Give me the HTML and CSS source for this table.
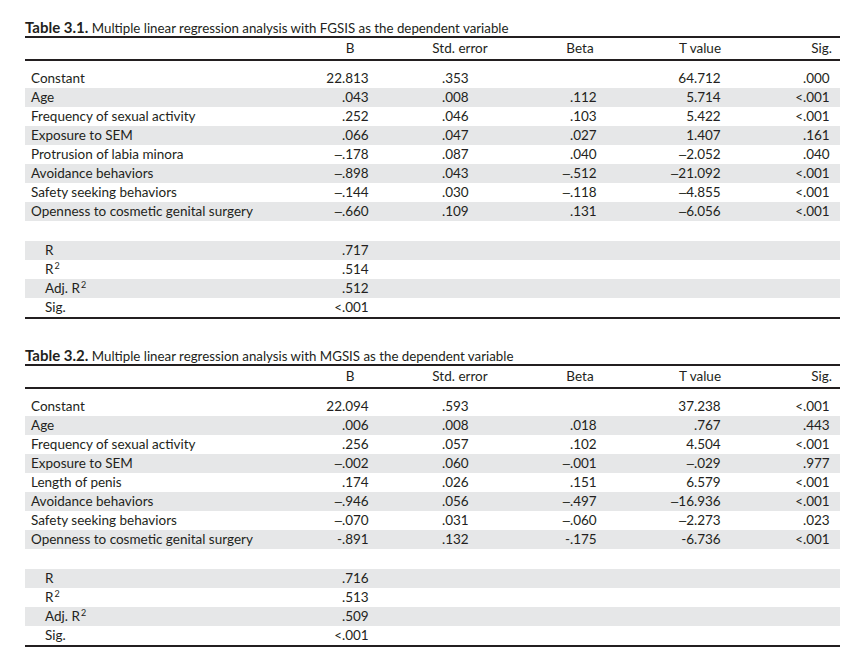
FILE: index.html
```html
<!DOCTYPE html>
<html lang="en">
<head>
<meta charset="utf-8">
<title>Regression tables</title>
<link rel="stylesheet" href="styles.css">
</head>
<body>
<div class="page">

  <section class="tbl">
    <div class="caption"><b>Table 3.1.</b> Multiple linear regression analysis with FGSIS as the dependent variable</div>
    <div class="row head">
      <div class="lab"></div><div class="h">B</div><div class="h">Std. error</div><div class="h">Beta</div><div class="h">T value</div><div class="h hr">Sig.</div>
    </div>
    <div class="body">
      <div class="row"><div class="lab">Constant</div><div class="cb"><span class="i">22</span>.813</div><div class="cs"><span class="i"></span>.353</div><div class="cbe"></div><div class="ct"><span class="i">64</span>.712</div><div class="cg"><span class="i"></span>.000</div></div>
      <div class="row alt"><div class="lab">Age</div><div class="cb"><span class="i"></span>.043</div><div class="cs"><span class="i"></span>.008</div><div class="cbe"><span class="i"></span>.112</div><div class="ct"><span class="i">5</span>.714</div><div class="cg"><span class="i">&lt;</span>.001</div></div>
      <div class="row"><div class="lab">Frequency of sexual activity</div><div class="cb"><span class="i"></span>.252</div><div class="cs"><span class="i"></span>.046</div><div class="cbe"><span class="i"></span>.103</div><div class="ct"><span class="i">5</span>.422</div><div class="cg"><span class="i">&lt;</span>.001</div></div>
      <div class="row alt"><div class="lab">Exposure to SEM</div><div class="cb"><span class="i"></span>.066</div><div class="cs"><span class="i"></span>.047</div><div class="cbe"><span class="i"></span>.027</div><div class="ct"><span class="i">1</span>.407</div><div class="cg"><span class="i"></span>.161</div></div>
      <div class="row"><div class="lab">Protrusion of labia minora</div><div class="cb"><span class="i"><span class="m">–</span></span>.178</div><div class="cs"><span class="i"></span>.087</div><div class="cbe"><span class="i"></span>.040</div><div class="ct"><span class="i"><span class="m">–</span>2</span>.052</div><div class="cg"><span class="i"></span>.040</div></div>
      <div class="row alt"><div class="lab">Avoidance behaviors</div><div class="cb"><span class="i"><span class="m">–</span></span>.898</div><div class="cs"><span class="i"></span>.043</div><div class="cbe"><span class="i"><span class="m">–</span></span>.512</div><div class="ct"><span class="i"><span class="m">–</span>21</span>.092</div><div class="cg"><span class="i">&lt;</span>.001</div></div>
      <div class="row"><div class="lab">Safety seeking behaviors</div><div class="cb"><span class="i"><span class="m">–</span></span>.144</div><div class="cs"><span class="i"></span>.030</div><div class="cbe"><span class="i"><span class="m">–</span></span>.118</div><div class="ct"><span class="i"><span class="m">–</span>4</span>.855</div><div class="cg"><span class="i">&lt;</span>.001</div></div>
      <div class="row alt"><div class="lab">Openness to cosmetic genital surgery</div><div class="cb"><span class="i"><span class="m">–</span></span>.660</div><div class="cs"><span class="i"></span>.109</div><div class="cbe"><span class="i"></span>.131</div><div class="ct"><span class="i"><span class="m">–</span>6</span>.056</div><div class="cg"><span class="i">&lt;</span>.001</div></div>
      <div class="row blank"></div>
      <div class="row alt"><div class="lab st">R</div><div class="cb"><span class="i"></span>.717</div></div>
      <div class="row"><div class="lab st">R<span class="sup">2</span></div><div class="cb"><span class="i"></span>.514</div></div>
      <div class="row alt"><div class="lab st">Adj. R<span class="sup">2</span></div><div class="cb"><span class="i"></span>.512</div></div>
      <div class="row"><div class="lab st">Sig.</div><div class="cb"><span class="i">&lt;</span>.001</div></div>
    </div>
  </section>

  <section class="tbl second">
    <div class="caption"><b>Table 3.2.</b> Multiple linear regression analysis with MGSIS as the dependent variable</div>
    <div class="row head">
      <div class="lab"></div><div class="h">B</div><div class="h">Std. error</div><div class="h">Beta</div><div class="h">T value</div><div class="h hr">Sig.</div>
    </div>
    <div class="body">
      <div class="row"><div class="lab">Constant</div><div class="cb"><span class="i">22</span>.094</div><div class="cs"><span class="i"></span>.593</div><div class="cbe"></div><div class="ct"><span class="i">37</span>.238</div><div class="cg"><span class="i">&lt;</span>.001</div></div>
      <div class="row alt"><div class="lab">Age</div><div class="cb"><span class="i"></span>.006</div><div class="cs"><span class="i"></span>.008</div><div class="cbe"><span class="i"></span>.018</div><div class="ct"><span class="i"></span>.767</div><div class="cg"><span class="i"></span>.443</div></div>
      <div class="row"><div class="lab">Frequency of sexual activity</div><div class="cb"><span class="i"></span>.256</div><div class="cs"><span class="i"></span>.057</div><div class="cbe"><span class="i"></span>.102</div><div class="ct"><span class="i">4</span>.504</div><div class="cg"><span class="i">&lt;</span>.001</div></div>
      <div class="row alt"><div class="lab">Exposure to SEM</div><div class="cb"><span class="i"><span class="m">–</span></span>.002</div><div class="cs"><span class="i"></span>.060</div><div class="cbe"><span class="i"><span class="m">–</span></span>.001</div><div class="ct"><span class="i"><span class="m">–</span></span>.029</div><div class="cg"><span class="i"></span>.977</div></div>
      <div class="row"><div class="lab">Length of penis</div><div class="cb"><span class="i"></span>.174</div><div class="cs"><span class="i"></span>.026</div><div class="cbe"><span class="i"></span>.151</div><div class="ct"><span class="i">6</span>.579</div><div class="cg"><span class="i">&lt;</span>.001</div></div>
      <div class="row alt"><div class="lab">Avoidance behaviors</div><div class="cb"><span class="i"><span class="m">–</span></span>.946</div><div class="cs"><span class="i"></span>.056</div><div class="cbe"><span class="i"><span class="m">–</span></span>.497</div><div class="ct"><span class="i"><span class="m">–</span>16</span>.936</div><div class="cg"><span class="i">&lt;</span>.001</div></div>
      <div class="row"><div class="lab">Safety seeking behaviors</div><div class="cb"><span class="i"><span class="m">–</span></span>.070</div><div class="cs"><span class="i"></span>.031</div><div class="cbe"><span class="i"><span class="m">–</span></span>.060</div><div class="ct"><span class="i"><span class="m">–</span>2</span>.273</div><div class="cg"><span class="i"></span>.023</div></div>
      <div class="row alt"><div class="lab">Openness to cosmetic genital surgery</div><div class="cb"><span class="i">-</span>.891</div><div class="cs"><span class="i"></span>.132</div><div class="cbe"><span class="i">-</span>.175</div><div class="ct"><span class="i">-6</span>.736</div><div class="cg"><span class="i">&lt;</span>.001</div></div>
      <div class="row blank"></div>
      <div class="row alt"><div class="lab st">R</div><div class="cb"><span class="i"></span>.716</div></div>
      <div class="row"><div class="lab st">R<span class="sup">2</span></div><div class="cb"><span class="i"></span>.513</div></div>
      <div class="row alt"><div class="lab st">Adj. R<span class="sup">2</span></div><div class="cb"><span class="i"></span>.509</div></div>
      <div class="row"><div class="lab st">Sig.</div><div class="cb"><span class="i">&lt;</span>.001</div></div>
    </div>
  </section>

</div>
</body>
</html>
```

FILE: styles.css
```css
html, body {
  margin: 0;
  padding: 0;
  background: #ffffff;
}

body {
  font-family: "Lato", "Liberation Sans", sans-serif;
  font-size: 13.5px;
  color: #231f20;
}

.page {
  width: 815px;
  margin-left: 25px;
  display: flex;
  flex-direction: column;
}

.tbl {
  margin-top: 18px;
}

.tbl.second {
  margin-top: 27px;
}

.caption {
  height: 18px;
  line-height: 18px;
  border-bottom: 2px solid #231f20;
  white-space: nowrap;
  font-size: 13.3px;
}

.caption b {
  font-size: 15px;
  font-weight: 700;
}

.row {
  display: grid;
  grid-template-columns: 275px 100px 120px 120px 120px 80px;
  height: 19px;
  line-height: 19px;
  white-space: nowrap;
}

.row.head {
  height: 21px;
  line-height: 21px;
  border-bottom: 2px solid #231f20;
}

.row.alt {
  background: #e6e7e8;
}

.row.blank {
  height: 20px;
}

.body {
  padding-top: 8px;
  border-bottom: 2px solid #231f20;
}

.h {
  text-align: center;
}

.h.hr {
  text-align: right;
  padding-right: 8px;
}

.lab {
  padding-left: 6px;
}

.lab.st {
  padding-left: 20px;
}

.sup {
  font-size: 9px;
  line-height: 0;
  vertical-align: 5px;
  margin-left: 1px;
}

.i {
  display: inline-block;
  text-align: right;
  width: 24px;
}

.m {
  font-family: "Liberation Sans", sans-serif;
  font-size: 13px;
}

.cb { padding-left: 18px; }
.cs { padding-left: 18px; }
.cbe { padding-left: 26px; }
.ct { padding-left: 14px; }
.ct .i { width: 40px; }
.cg { padding-left: 19px; }
```
